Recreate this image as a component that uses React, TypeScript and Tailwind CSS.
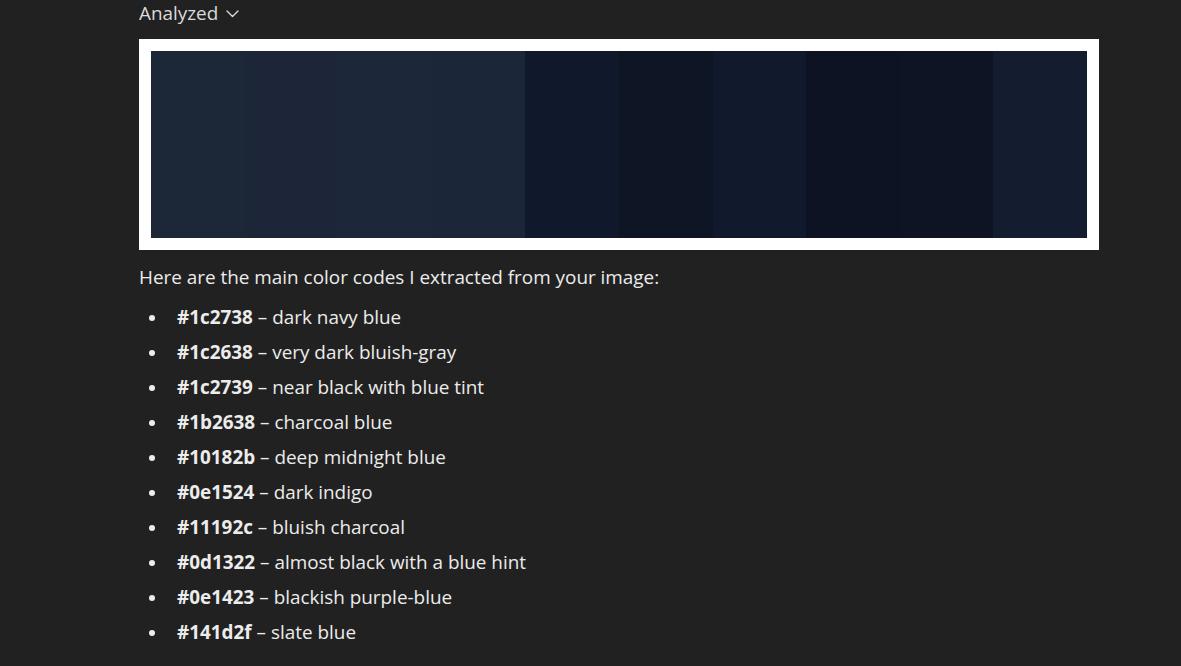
import React from "react";

const swatches = [
  "#1c2738",
  "#1c2638",
  "#1c2739",
  "#1b2638",
  "#10182b",
  "#0e1524",
  "#11192c",
  "#0d1322",
  "#0e1423",
  "#141d2f",
];

const items: [string, string][] = [
  ["#1c2738", "dark navy blue"],
  ["#1c2638", "very dark bluish-gray"],
  ["#1c2739", "near black with blue tint"],
  ["#1b2638", "charcoal blue"],
  ["#10182b", "deep midnight blue"],
  ["#0e1524", "dark indigo"],
  ["#11192c", "bluish charcoal"],
  ["#0d1322", "almost black with a blue hint"],
  ["#0e1423", "blackish purple-blue"],
  ["#141d2f", "slate blue"],
];

export default function App() {
  return (
    <div
      className="w-[1181px] h-[666px] overflow-hidden bg-[#212121] text-[#ececec]"
      style={{ fontFamily: '"Open Sans", "Noto Sans", sans-serif' }}
    >
      <div className="ml-[139px] w-[960px]">
        <div className="flex items-center h-[26px] text-[18.9px] text-[#dadada]">
          <span>Analyzed</span>
          <svg
            className="ml-[8px] mt-[1px]"
            width="13"
            height="8"
            viewBox="0 0 13 8"
            fill="none"
          >
            <path
              d="M1 1l5.5 5.5L12 1"
              stroke="#dadada"
              strokeWidth="1.4"
              strokeLinecap="round"
              strokeLinejoin="round"
            />
          </svg>
        </div>
        <div className="mt-[13px] bg-white pt-[12px] pb-[12px] pl-[12px] pr-[12px]">
          <div className="flex h-[187px]">
            {swatches.map((c, i) => (
              <div key={i} className="flex-1" style={{ backgroundColor: c }} />
            ))}
          </div>
        </div>
        <p className="mt-[10px] text-[18.9px] leading-[35px]">
          Here are the main color codes I extracted from your image:
        </p>
        <ul className="mt-[5px] text-[18.9px] leading-[35px]">
          {items.map(([code, name]) => (
            <li key={code} className="flex items-center">
              <span className="ml-[10px] mr-[22px] w-[6px] h-[6px] rounded-full bg-[#ececec]" />
              <span>
                <strong className="font-bold">{code}</strong> – {name}
              </span>
            </li>
          ))}
        </ul>
      </div>
    </div>
  );
}
